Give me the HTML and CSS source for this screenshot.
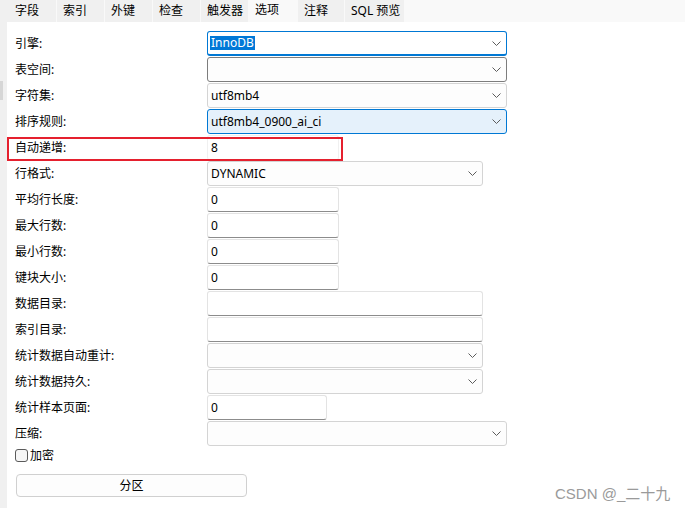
FILE: index.html
```html
<!DOCTYPE html>
<html lang="zh-CN">
<head>
<meta charset="utf-8">
<title>选项</title>
<link rel="stylesheet" href="styles.css">
</head>
<body>
<div class="window">
  <div class="tabbar">
    <div class="tab t1">字段</div>
    <div class="tab">索引</div>
    <div class="tab">外键</div>
    <div class="tab">检查</div>
    <div class="tab">触发器</div>
    <div class="tab active">选项</div>
    <div class="tab t7">注释</div>
    <div class="tab t8">SQL 预览</div>
  </div>
  <div class="main">
    <div class="gutter"><div class="thumb"></div></div>
    <div class="panel">
      <div class="form">
        <div class="row"><div class="label">引擎:</div>
          <div class="ctl sel w300 focus"><span class="hl">InnoDB</span><svg class="chev" width="9" height="5" viewBox="0 0 9 5"><path d="M0.5 0.5 L4.5 4.5 L8.5 0.5" /></svg></div></div>
        <div class="row"><div class="label">表空间:</div>
          <div class="ctl sel w300 dark"><svg class="chev" width="9" height="5" viewBox="0 0 9 5"><path d="M0.5 0.5 L4.5 4.5 L8.5 0.5" /></svg></div></div>
        <div class="row"><div class="label">字符集:</div>
          <div class="ctl sel w300"><span>utf8mb4</span><svg class="chev" width="9" height="5" viewBox="0 0 9 5"><path d="M0.5 0.5 L4.5 4.5 L8.5 0.5" /></svg></div></div>
        <div class="row"><div class="label">排序规则:</div>
          <div class="ctl sel w300 hover"><span>utf8mb4_0900_ai_ci</span><svg class="chev" width="9" height="5" viewBox="0 0 9 5"><path d="M0.5 0.5 L4.5 4.5 L8.5 0.5" /></svg></div></div>
        <div class="row"><div class="label">自动递增:</div>
          <div class="ctl inp w132 plain"><span>8</span></div>
          <div class="mark"></div></div>
        <div class="row"><div class="label">行格式:</div>
          <div class="ctl sel w276"><span>DYNAMIC</span><svg class="chev" width="9" height="5" viewBox="0 0 9 5"><path d="M0.5 0.5 L4.5 4.5 L8.5 0.5" /></svg></div></div>
        <div class="row"><div class="label">平均行长度:</div>
          <div class="ctl inp w132"><span>0</span></div></div>
        <div class="row"><div class="label">最大行数:</div>
          <div class="ctl inp w132"><span>0</span></div></div>
        <div class="row"><div class="label">最小行数:</div>
          <div class="ctl inp w132"><span>0</span></div></div>
        <div class="row"><div class="label">键块大小:</div>
          <div class="ctl inp w132"><span>0</span></div></div>
        <div class="row"><div class="label">数据目录:</div>
          <div class="ctl inp w276"></div></div>
        <div class="row"><div class="label">索引目录:</div>
          <div class="ctl inp w276"></div></div>
        <div class="row"><div class="label">统计数据自动重计:</div>
          <div class="ctl sel w276"><svg class="chev" width="9" height="5" viewBox="0 0 9 5"><path d="M0.5 0.5 L4.5 4.5 L8.5 0.5" /></svg></div></div>
        <div class="row"><div class="label">统计数据持久:</div>
          <div class="ctl sel w276"><svg class="chev" width="9" height="5" viewBox="0 0 9 5"><path d="M0.5 0.5 L4.5 4.5 L8.5 0.5" /></svg></div></div>
        <div class="row"><div class="label">统计样本页面:</div>
          <div class="ctl inp w120"><span>0</span></div></div>
        <div class="row"><div class="label">压缩:</div>
          <div class="ctl sel w300"><svg class="chev" width="9" height="5" viewBox="0 0 9 5"><path d="M0.5 0.5 L4.5 4.5 L8.5 0.5" /></svg></div></div>
      </div>
      <div class="check"><span class="box"></span><span class="check-label">加密</span></div>
      <div class="btn">分区</div>
    </div>
  </div>
  <div class="watermark">CSDN @_二十九</div>
</div>
</body>
</html>
```

FILE: styles.css
```css
html, body {
  margin: 0;
  padding: 0;
}
body {
  width: 685px;
  height: 508px;
  overflow: hidden;
  background: #ffffff;
  font-family: "Noto Sans", "Noto Sans CJK SC", sans-serif;
  font-size: 12px;
  color: #000;
}
.window {
  position: relative;
  width: 685px;
  height: 508px;
  display: flex;
  flex-direction: column;
}
.tabbar {
  height: 22px;
  display: flex;
  gap: 1px;
  background: #f9f9f9;
  flex: none;
}
.tab {
  width: 47px;
  height: 22px;
  box-sizing: border-box;
  padding-left: 6px;
  line-height: 22px;
  background: #f0f0f0;
  white-space: nowrap;
}
.tab.t1 {
  width: 56px;
  padding-left: 15px;
}
.tab.active {
  width: 48px;
  background: #f9f9f9;
  line-height: 20px;
}
.tab.t7 {
  width: 46px;
}
.tab.t8 {
  width: 59px;
}
.main {
  flex: 1;
  display: flex;
}
.gutter {
  width: 7px;
  flex: none;
  background: #f0f0f0;
}
.thumb {
  width: 3px;
  height: 19px;
  margin-top: 59px;
  background: #d6d6d6;
}
.panel {
  flex: 1;
  background: #ffffff;
  padding: 9px 0 0 8px;
}
.form {
  display: flex;
  flex-direction: column;
}
.row {
  position: relative;
  display: flex;
  height: 26px;
}
.label {
  width: 192px;
  flex: none;
  line-height: 25px;
  white-space: nowrap;
}
.ctl {
  height: 25px;
  box-sizing: border-box;
  display: flex;
  align-items: center;
  padding-left: 3px;
  border-radius: 3px;
  white-space: nowrap;
}
.sel {
  background: #fdfdfd;
  border: 1px solid #d4d4d4;
}
.sel.dark {
  border-color: #7d7d7d;
}
.sel.focus {
  background: #ffffff;
  border: 1px solid #0078d4;
  border-bottom-width: 2px;
  padding-left: 2px;
}
.sel.hover {
  background: #e5f1fb;
  border-color: #0078d4;
}
.inp {
  background: #ffffff;
  border: 1px solid #e3e3e3;
  border-bottom-color: #8c8c8c;
}
.inp.plain {
  border-color: #f0f0f0;
  border-bottom-color: #ffffff;
}
.w300 { width: 300px; }
.w276 { width: 276px; }
.w132 { width: 132px; }
.w120 { width: 120px; }
.hl {
  background: #0078d7;
  color: #ffffff;
  line-height: 14px;
  padding: 0 1px;
}
.chev {
  margin-left: auto;
  margin-right: 5px;
  flex: none;
}
.chev path {
  fill: none;
  stroke: #5c5c5c;
  stroke-width: 1;
}
.mark {
  position: absolute;
  left: -8px;
  top: 2px;
  width: 336px;
  height: 24px;
  box-sizing: border-box;
  border: 2px solid #e5202e;
}
.check {
  display: flex;
  align-items: center;
  height: 13px;
  margin-top: 2px;
}
.box {
  width: 13px;
  height: 13px;
  box-sizing: border-box;
  border: 1px solid #5a5a5a;
  border-radius: 3px;
  background: #f6f6f6;
}
.check-label {
  margin-left: 2px;
  line-height: 13px;
}
.btn {
  margin-top: 12px;
  margin-left: 1px;
  width: 231px;
  height: 23px;
  box-sizing: border-box;
  border: 1px solid #d0d0d0;
  border-radius: 4px;
  background: #fdfdfd;
  text-align: center;
  line-height: 21px;
}
.watermark {
  position: absolute;
  left: 555px;
  top: 482px;
  font-family: "Liberation Sans", "Noto Sans CJK SC", sans-serif;
  font-size: 15px;
  color: #9a9a9a;
  white-space: nowrap;
}
```
